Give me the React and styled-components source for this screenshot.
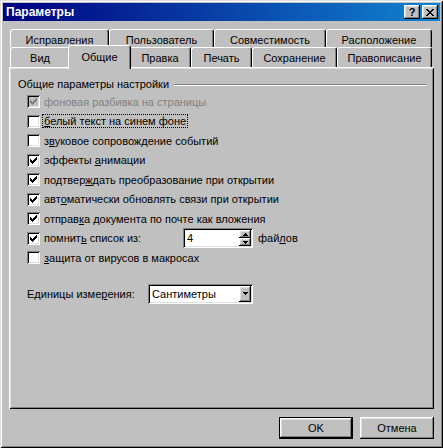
import styled, { createGlobalStyle } from "styled-components";

const GlobalStyle = createGlobalStyle`
  html, body {
    margin: 0;
    padding: 0;
    background: #c0c0c0;
  }
  body {
    font-family: "Liberation Sans", Arial, sans-serif;
    font-size: 11px;
    color: #000;
  }
`;

const raised = `
  box-shadow: inset -1px -1px #000, inset 1px 1px #fff, inset -2px -2px #808080, inset 2px 2px #dfdfdf;
`;
const sunken = `
  box-shadow: inset 1px 1px #808080, inset -1px -1px #fff, inset 2px 2px #000, inset -2px -2px #dfdfdf;
`;

// petites icônes pixel par pixel
const CHECK = "M6 0h1v1h-1z M5 1h2v1h-2z M0 2h1v1h-1z M4 2h3v1h-3z M0 3h2v1h-2z M3 3h3v1h-3z M0 4h5v1h-5z M1 5h3v1h-3z M2 6h1v1h-1z";
const CLOSE = "M0 0h2v1h-2z M6 0h2v1h-2z M1 1h2v1h-2z M5 1h2v1h-2z M2 2h4v1h-4z M3 3h2v1h-2z M2 4h4v1h-4z M1 5h2v1h-2z M5 5h2v1h-2z M0 6h2v1h-2z M6 6h2v1h-2z";
const UP = "M2 0h1v1h-1z M1 1h3v1h-3z M0 2h5v1h-5z";
const DOWN = "M0 0h5v1h-5z M1 1h3v1h-3z M2 2h1v1h-1z";

const topTabs = [
  { label: "Исправления", w: 99 },
  { label: "Пользователь", w: 105 },
  { label: "Совместимость", w: 112 },
  { label: "Расположение", w: 106 },
];

const bottomTabs = [
  { label: "Вид", w: 60 },
  { label: "Общие", w: 59, active: true },
  { label: "Правка", w: 62 },
  { label: "Печать", w: 61 },
  { label: "Сохранение", w: 85 },
  { label: "Правописание", w: 95 },
];

function Pixels({ d, w, h, color = "#000" }) {
  return (
    <svg width={w} height={h} viewBox={`0 0 ${w} ${h}`} shapeRendering="crispEdges">
      <path d={d} fill={color} />
    </svg>
  );
}

function CheckBox({ checked, disabled }) {
  return (
    <Box $disabled={disabled}>
      {checked && <Pixels d={CHECK} w={7} h={7} color={disabled ? "#808080" : "#000"} />}
    </Box>
  );
}

export default function App() {
  return (
    <>
      <GlobalStyle />
      <Window>
        <TitleBar>
          <Title>Параметры</Title>
          <TitleButtons>
            <TitleButton>
              <HelpGlyph>?</HelpGlyph>
            </TitleButton>
            <TitleButton>
              <Pixels d={CLOSE} w={8} h={7} />
            </TitleButton>
          </TitleButtons>
        </TitleBar>

        <Content>
          <TabStrip>
            <TabRow $h={18}>
              {topTabs.map((tab) => (
                <Tab key={tab.label} $w={tab.w} $top>
                  {tab.label}
                </Tab>
              ))}
            </TabRow>
            <TabRow $h={20}>
              {bottomTabs.map((tab) => (
                <Tab key={tab.label} $w={tab.w} $active={tab.active}>
                  {tab.label}
                </Tab>
              ))}
            </TabRow>
          </TabStrip>

          <Panel>
            <GroupHeader>
              <span>Общие параметры настройки</span>
              <GroupLine />
            </GroupHeader>

            <Options>
              <OptionRow>
                <CheckBox checked disabled />
                <Label $disabled>фоновая разбивка на страницы</Label>
              </OptionRow>
              <OptionRow>
                <CheckBox />
                <Label $focused><u>б</u>елый текст на синем фоне</Label>
              </OptionRow>
              <OptionRow>
                <CheckBox />
                <Label>з<u>в</u>уковое сопровождение событий</Label>
              </OptionRow>
              <OptionRow>
                <CheckBox checked />
                <Label>эффекты <u>а</u>нимации</Label>
              </OptionRow>
              <OptionRow>
                <CheckBox checked />
                <Label>подтвер<u>ж</u>дать преобразование при открытии</Label>
              </OptionRow>
              <OptionRow>
                <CheckBox checked />
                <Label>авт<u>о</u>матически обновлять связи при открытии</Label>
              </OptionRow>
              <OptionRow>
                <CheckBox checked />
                <Label>отправ<u>к</u>а документа по почте как вложения</Label>
              </OptionRow>
              <OptionRow>
                <CheckBox checked />
                <Label $w={141}>помнит<u>ь</u> список из:</Label>
                <Field $w={70}>
                  <FieldText>4</FieldText>
                  <SpinButtons>
                    <SpinButton><Pixels d={UP} w={5} h={3} /></SpinButton>
                    <SpinButton><Pixels d={DOWN} w={5} h={3} /></SpinButton>
                  </SpinButtons>
                </Field>
                <Suffix>фай<u>л</u>ов</Suffix>
              </OptionRow>
              <OptionRow>
                <CheckBox />
                <Label><u>з</u>ащита от вирусов в макросах</Label>
              </OptionRow>
            </Options>

            <UnitsRow>
              <UnitsLabel>Единицы изме<u>р</u>ения:</UnitsLabel>
              <Field $w={105}>
                <FieldText>Сантиметры</FieldText>
                <DropButton><Pixels d={DOWN} w={5} h={3} /></DropButton>
              </Field>
            </UnitsRow>
          </Panel>

          <Footer>
            <Button $default>OK</Button>
            <Button>Отмена</Button>
          </Footer>
        </Content>
      </Window>
    </>
  );
}

const Window = styled.div`
  box-sizing: border-box;
  width: 443px;
  height: 448px;
  padding: 3px;
  display: flex;
  flex-direction: column;
  background: #c0c0c0;
  box-shadow: inset 1px 1px #dfdfdf, inset -1px -1px #000, inset 2px 2px #fff, inset -2px -2px #808080;
`;

const TitleBar = styled.div`
  height: 18px;
  display: flex;
  align-items: center;
  padding: 0 2px 0 3px;
  background: linear-gradient(to right, #000080, #1084d0);
`;

const Title = styled.span`
  flex: 1;
  color: #fff;
  font-weight: bold;
  font-size: 12px;
`;

const TitleButtons = styled.div`
  display: flex;
  gap: 2px;
`;

const TitleButton = styled.div`
  box-sizing: border-box;
  width: 16px;
  height: 14px;
  display: flex;
  align-items: center;
  justify-content: center;
  background: #c0c0c0;
  ${raised}
`;

const HelpGlyph = styled.span`
  font-weight: bold;
  font-size: 11px;
  line-height: 11px;
  margin-top: 1px;
`;

const Content = styled.div`
  flex: 1;
  display: flex;
  flex-direction: column;
  padding: 8px 6px 0;
`;

const TabStrip = styled.div`
  display: flex;
  flex-direction: column;
  padding-left: 1px;
`;

const TabRow = styled.div`
  display: flex;
  align-items: flex-end;
  height: ${(p) => p.$h}px;
`;

const Tab = styled.div`
  box-sizing: border-box;
  width: ${(p) => (p.$active ? p.$w + 4 : p.$w)}px;
  height: ${(p) => (p.$active ? 24 : p.$top ? 18 : 20)}px;
  margin: ${(p) => (p.$active ? "0 -2px -2px" : "0")};
  padding-top: ${(p) => (p.$active ? 5 : 4)}px;
  display: flex;
  justify-content: center;
  white-space: nowrap;
  background: #c0c0c0;
  border-left: 1px solid #fff;
  border-top: 1px solid #fff;
  border-right: 1px solid #000;
  border-radius: 3px 3px 0 0;
  box-shadow: inset -1px 0 #808080;
  ${(p) => p.$active && "position: relative; z-index: 2;"}
`;

const Panel = styled.div`
  box-sizing: border-box;
  height: 342px;
  padding: 11px 8px 0 9px;
  box-shadow: inset 1px 1px #fff, inset -1px -1px #000, inset 2px 2px #dfdfdf, inset -2px -2px #808080;
`;

const GroupHeader = styled.div`
  display: flex;
  align-items: center;
  height: 13px;
  line-height: 13px;
`;

const GroupLine = styled.div`
  flex: 1;
  height: 0;
  margin-left: 5px;
  border-top: 1px solid #808080;
  border-bottom: 1px solid #fff;
`;

const Options = styled.div`
  display: flex;
  flex-direction: column;
  margin-top: 1px;
  padding-left: 9px;
`;

const OptionRow = styled.div`
  display: flex;
  align-items: center;
  height: 19.5px;
`;

const Box = styled.span`
  box-sizing: border-box;
  display: flex;
  flex-shrink: 0;
  width: 13px;
  height: 13px;
  padding: 3px;
  background: ${(p) => (p.$disabled ? "#c0c0c0" : "#fff")};
  ${sunken}
`;

const Label = styled.span`
  box-sizing: border-box;
  margin-left: 2px;
  padding: 0 1px;
  line-height: 12px;
  white-space: nowrap;
  border: 1px dotted ${(p) => (p.$focused ? "#000" : "transparent")};
  color: ${(p) => (p.$disabled ? "#808080" : "#000")};
  ${(p) => p.$w && `width: ${p.$w}px;`}
`;

const Field = styled.div`
  box-sizing: border-box;
  display: flex;
  flex-shrink: 0;
  width: ${(p) => p.$w}px;
  height: 20px;
  padding: 2px;
  background: #fff;
  ${sunken}
`;

const FieldText = styled.span`
  flex: 1;
  display: flex;
  align-items: center;
  padding-left: 2px;
  white-space: nowrap;
`;

const SpinButtons = styled.div`
  display: flex;
  flex-direction: column;
  width: 12px;
`;

const SpinButton = styled.div`
  flex: 1;
  display: flex;
  align-items: center;
  justify-content: center;
  background: #c0c0c0;
  ${raised}
`;

const DropButton = styled.div`
  width: 12px;
  display: flex;
  align-items: center;
  justify-content: center;
  background: #c0c0c0;
  ${raised}
`;

const Suffix = styled.span`
  margin-left: 5px;
`;

const UnitsRow = styled.div`
  display: flex;
  align-items: center;
  margin-top: 16px;
  padding-left: 9px;
`;

const UnitsLabel = styled.span`
  width: 121px;
  white-space: nowrap;
`;

const Footer = styled.div`
  display: flex;
  justify-content: flex-end;
  gap: 7px;
  margin-top: 8px;
`;

const Button = styled.button`
  width: 74px;
  height: 22px;
  padding: 0;
  border: 0;
  font: inherit;
  color: #000;
  background: #c0c0c0;
  ${(p) =>
    p.$default
      ? "box-shadow: inset 0 0 0 1px #000, inset -2px -2px #000, inset 2px 2px #fff, inset -3px -3px #808080, inset 3px 3px #dfdfdf;"
      : raised}
`;
